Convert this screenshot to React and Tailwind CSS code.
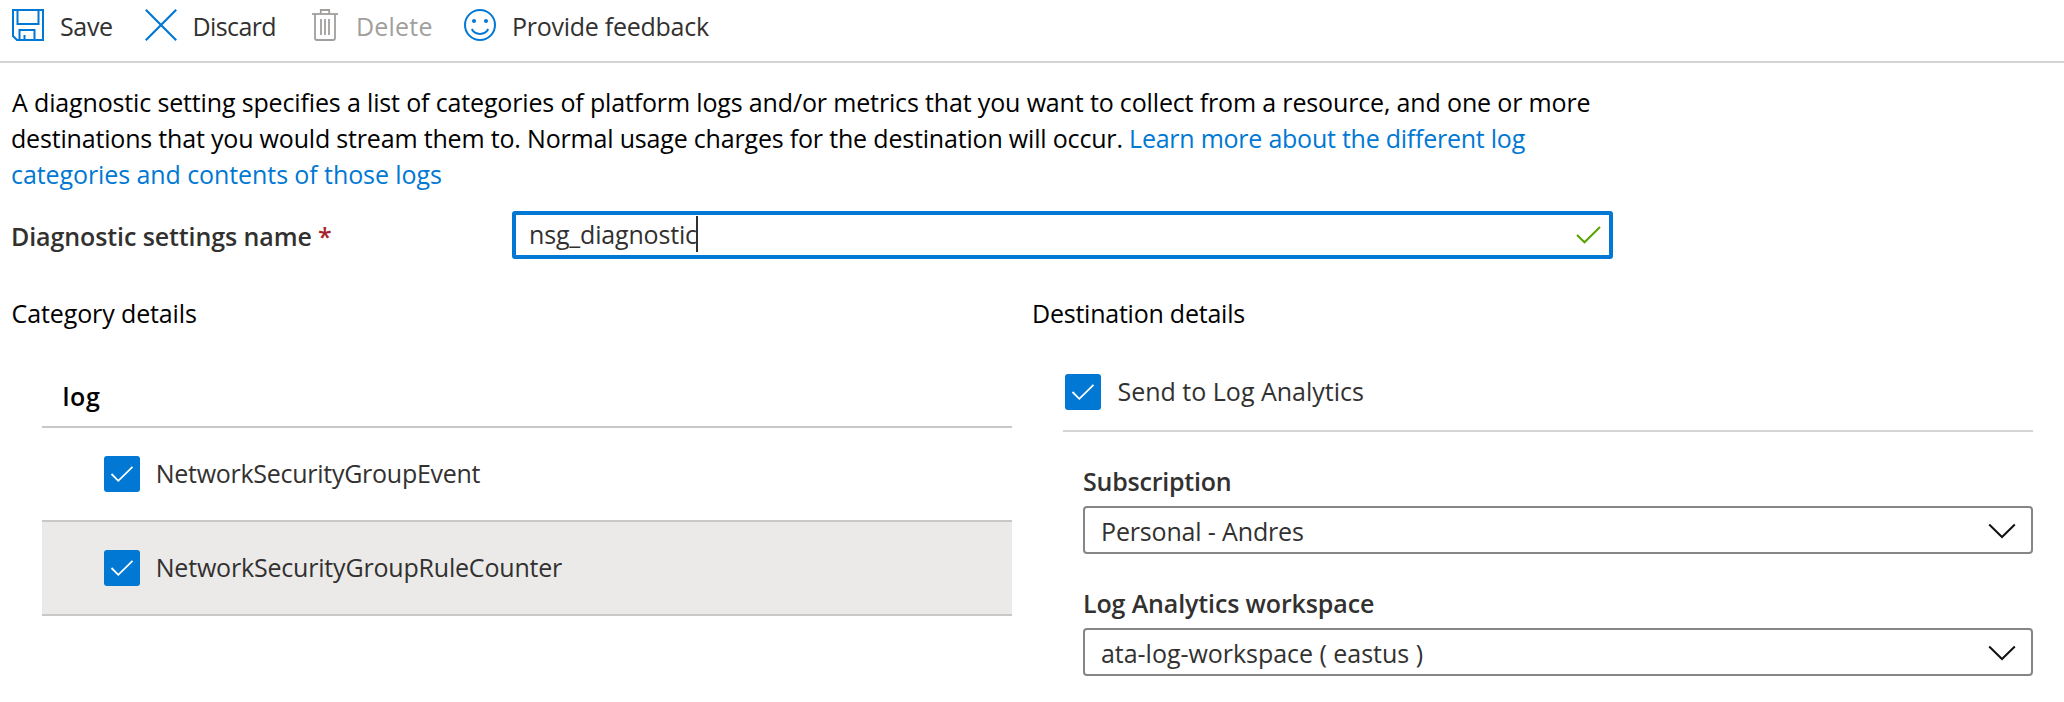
function SaveIcon() {
  return (
    <svg className="size-8 shrink-0" viewBox="0 0 32 32" fill="none" stroke="#0078d4" strokeWidth="2">
      <path d="M1 1H31V31H5L1 27Z" />
      <path d="M5.5 1V15H26.5V1" />
      <path d="M7.5 31V21H22.5V31" />
      <path d="M12.5 31V26" />
    </svg>
  );
}

function DiscardIcon() {
  return (
    <svg className="size-8 shrink-0" viewBox="0 0 32 32" fill="none" stroke="#0078d4" strokeWidth="2.2">
      <path d="M0.8 0.8L31.2 31.2M31.2 0.8L0.8 31.2" />
    </svg>
  );
}

function TrashIcon() {
  return (
    <svg className="h-8 w-[26px] shrink-0" viewBox="0 0 26 32" fill="none" stroke="#a19f9d" strokeWidth="1.8">
      <path d="M0 5H26" />
      <path d="M8.8 5V1H17.2V5" />
      <path d="M3 5V29Q3 31 5 31H21Q23 31 23 29V5" />
      <path d="M9 10V26M13 10V26M17 10V26" />
    </svg>
  );
}

function SmileIcon() {
  return (
    <svg className="size-8 shrink-0" viewBox="0 0 32 32" fill="none" stroke="#0078d4" strokeWidth="2">
      <circle cx="16" cy="16" r="15" />
      <circle cx="10" cy="12" r="2" fill="#0078d4" stroke="none" />
      <circle cx="22" cy="12" r="2" fill="#0078d4" stroke="none" />
      <path d="M7.8 20C11 26.5 21 26.5 24.2 20" />
    </svg>
  );
}

function Checkbox() {
  return (
    <span className="flex size-9 shrink-0 items-center justify-center rounded-[3px] bg-[#0078d4]">
      <svg className="size-9" viewBox="0 0 36 36" fill="none" stroke="#fff" strokeWidth="1.8">
        <path d="M7.5 18L14.3 24.8L28.5 10.8" />
      </svg>
    </span>
  );
}

function Select({ value, className }) {
  return (
    <div className="flex h-12 w-[950px] items-center justify-between rounded-[4px] border-2 border-[#868686] pt-0.5 pr-[15px] pl-4">
      <span className={className}>{value}</span>
      <svg className="h-4 w-7" viewBox="0 0 28 16" fill="none" stroke="#111" strokeWidth="2">
        <path d="M1.2 1.5L14 14L26.8 1.5" />
      </svg>
    </div>
  );
}

export default function App() {
  return (
    <div className="h-[702px] w-[2064px] overflow-hidden bg-white font-['Open_Sans','Noto_Sans',sans-serif] text-[25px] leading-9 whitespace-nowrap text-[#323130]">
      <header className="flex h-[63px] items-start border-b-2 border-[#d4d4d4] pt-[9px] pl-3 leading-[34px]">
        <button className="flex h-9 w-[133px] items-start gap-4">
          <SaveIcon />
          <span className="tracking-[-0.35px]">Save</span>
        </button>
        <button className="flex h-9 w-[167px] items-start gap-[15.5px]">
          <DiscardIcon />
          <span className="tracking-[-0.6px]">Discard</span>
        </button>
        <button className="flex h-9 w-[152px] items-start gap-[18px] text-[#a19f9d]">
          <TrashIcon />
          <span className="tracking-[0.2px]">Delete</span>
        </button>
        <button className="flex h-9 items-start gap-4">
          <SmileIcon />
          <span className="tracking-[-0.26px]">Provide feedback</span>
        </button>
      </header>

      <p className="mt-[21px] pl-[11px] text-black">
        <span className="ml-px tracking-[-0.15px]">
          A diagnostic setting specifies a list of categories of platform logs and/or metrics that you want to collect from a resource, and one or more
        </span>
        <br />
        <span className="tracking-[-0.182px]">
          destinations that you would stream them to. Normal usage charges for the destination will occur.{" "}
        </span>
        <a className="text-[#0078d4]">
          <span className="tracking-[-0.24px]">Learn more about the different log</span>
          <br />
          <span className="tracking-[-0.083px]">categories and contents of those logs</span>
        </a>
      </p>

      <div className="mt-[19px] flex h-12 items-center">
        <label className="w-[512px] pt-0.5 pl-[11px] font-semibold tracking-[-0.1px]">
          Diagnostic settings name <span className="text-[#a4262c]">*</span>
        </label>
        <div className="flex h-12 w-[1101px] items-center justify-between rounded-[3px] border-4 border-[#0078d4] pr-2 pl-[13px]">
          <span className="flex items-center pb-0.5">
            <span className="tracking-[-0.18px]">nsg_diagnostic</span>
            <span className="-ml-px h-9 w-[2px] bg-[#323130]" />
          </span>
          <svg className="h-[18px] w-[25px]" viewBox="0 0 25 18" fill="none" stroke="#57a300" strokeWidth="2">
            <path d="M1 9L8.5 16.3L24 1" />
          </svg>
        </div>
      </div>

      <div className="flex pt-9">
        <section className="w-[1032px]">
          <h2 className="pl-[11.6px] tracking-[-0.12px] text-black">Category details</h2>
          <div className="mt-[47px] ml-[42px] w-[970px]">
            <div className="h-[50px] border-b-2 border-[#c8c8c8] pl-[20.5px] font-semibold tracking-[0.6px] text-black">log</div>
            <div className="flex h-[94px] items-center gap-[15.7px] border-b-2 border-[#c8c8c8] pl-[62px]">
              <Checkbox />
              <span className="pb-0.5 tracking-[-0.27px]">NetworkSecurityGroupEvent</span>
            </div>
            <div className="flex h-[94px] items-center gap-[15.7px] border-b-2 border-[#c8c8c8] bg-[#ebeae9] pl-[62px]">
              <Checkbox />
              <span className="pb-0.5 tracking-[-0.19px]">NetworkSecurityGroupRuleCounter</span>
            </div>
          </div>
        </section>

        <section>
          <h2 className="tracking-[-0.23px] text-black">Destination details</h2>
          <div className="mt-[43px] ml-[31px] flex h-[58px] w-[970px] items-start gap-[16.5px] border-b-2 border-[#d4d4d4] pl-0.5">
            <Checkbox />
            <span className="leading-[34px]">Send to Log Analytics</span>
          </div>
          <div className="mt-[31px] ml-[51px]">
            <div className="mb-[7px] font-semibold tracking-[-0.22px]">Subscription</div>
            <Select value="Personal - Andres" className="tracking-[-0.16px]" />
            <div className="mt-[31px] mb-[7px] font-semibold tracking-[-0.13px]">Log Analytics workspace</div>
            <Select value="ata-log-workspace ( eastus )" className="tracking-[-0.03px]" />
          </div>
        </section>
      </div>
    </div>
  );
}
